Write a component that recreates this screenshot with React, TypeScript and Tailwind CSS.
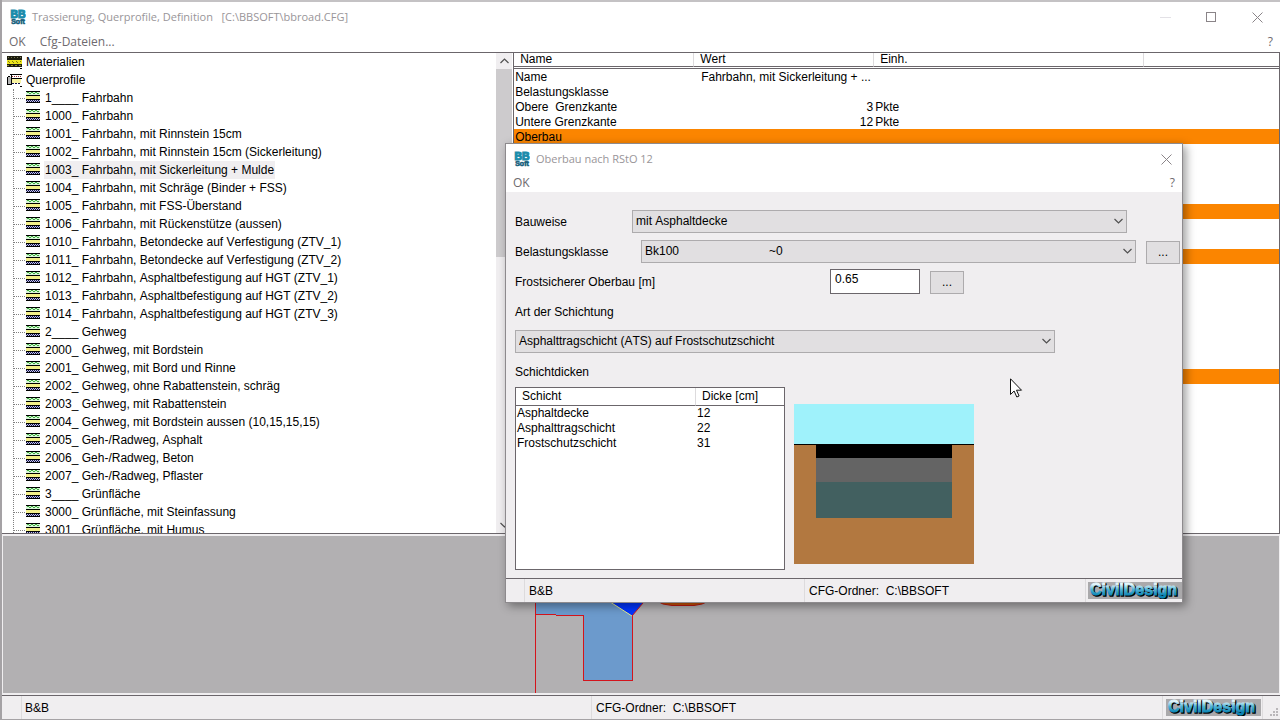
import type { ReactNode } from "react";

const PROFILES = [
  "1____ Fahrbahn",
  "1000_ Fahrbahn",
  "1001_ Fahrbahn, mit Rinnstein 15cm",
  "1002_ Fahrbahn, mit Rinnstein 15cm (Sickerleitung)",
  "1003_ Fahrbahn, mit Sickerleitung + Mulde",
  "1004_ Fahrbahn, mit Schräge (Binder + FSS)",
  "1005_ Fahrbahn, mit FSS-Überstand",
  "1006_ Fahrbahn, mit Rückenstütze (aussen)",
  "1010_ Fahrbahn, Betondecke auf Verfestigung (ZTV_1)",
  "1011_ Fahrbahn, Betondecke auf Verfestigung (ZTV_2)",
  "1012_ Fahrbahn, Asphaltbefestigung auf HGT (ZTV_1)",
  "1013_ Fahrbahn, Asphaltbefestigung auf HGT (ZTV_2)",
  "1014_ Fahrbahn, Asphaltbefestigung auf HGT (ZTV_3)",
  "2____ Gehweg",
  "2000_ Gehweg, mit Bordstein",
  "2001_ Gehweg, mit Bord und Rinne",
  "2002_ Gehweg, ohne Rabattenstein, schräg",
  "2003_ Gehweg, mit Rabattenstein",
  "2004_ Gehweg, mit Bordstein aussen (10,15,15,15)",
  "2005_ Geh-/Radweg, Asphalt",
  "2006_ Geh-/Radweg, Beton",
  "2007_ Geh-/Radweg, Pflaster",
  "3____ Grünfläche",
  "3000_ Grünfläche, mit Steinfassung",
  "3001_ Grünfläche, mit Humus",
];
const SELECTED = 4;

type Property = { name?: string; value?: string; unit?: string; right?: boolean; group?: boolean };

const PROPERTIES: Property[] = [
  { name: "Name", value: "Fahrbahn, mit Sickerleitung + ..." },
  { name: "Belastungsklasse" },
  { name: "Obere\u00a0 Grenzkante", value: "3", unit: "Pkte", right: true },
  { name: "Untere Grenzkante", value: "12", unit: "Pkte", right: true },
  { name: "Oberbau", group: true },
  {},
  {},
  {},
  {},
  { group: true },
  {},
  {},
  { group: true },
  {},
  {},
  {},
  {},
  {},
  {},
  {},
  { group: true },
];

const LAYERS = [
  ["Asphaltdecke", "12"],
  ["Asphalttragschicht", "22"],
  ["Frostschutzschicht", "31"],
];

function BBLogo() {
  return (
    <svg width="16" height="16" viewBox="0 0 16 16" className="shrink-0" aria-hidden="true">
      <g fontFamily="Liberation Sans, sans-serif" fontWeight="bold" textAnchor="middle">
        <text x="8" y="9" fontSize="10.5" fill="#1c8cab" stroke="#1c8cab" strokeWidth="1.1">BB</text>
        <text x="8" y="15" fontSize="7" fill="#17607c" stroke="#17607c" strokeWidth="0.6">Soft</text>
      </g>
    </svg>
  );
}

function LayersIcon() {
  return (
    <svg width="14" height="12" viewBox="0 0 14 12" shapeRendering="crispEdges" className="mb-0.5 shrink-0" aria-hidden="true">
      <rect width="14" height="4" fill="#d8f5d8" />
      <path d="M1 1.5h2M5 1.5h2M9 1.5h2M3 2.5h2M7 2.5h2M11 2.5h2" stroke="#3fae3f" />
      <rect y="5" width="14" height="3" fill="#f4f08a" />
      <rect y="9" width="14" height="2" fill="#c9c9e4" />
      <path d="M0 .5h14M0 4.5h14M0 8.5h14M0 11.5h14" stroke="#000" />
      <path d="M0 9.5h14M1 10.5h13" stroke="#10104c" strokeDasharray="1 1" />
    </svg>
  );
}

function MaterialIcon() {
  return (
    <svg width="15" height="13" viewBox="0 0 15 13" shapeRendering="crispEdges" className="shrink-0" aria-hidden="true">
      <rect width="15" height="11" fill="#1c1c10" />
      <path d="M1 1.5h13" stroke="#77774a" strokeDasharray="1 2" />
      <rect y="4" width="15" height="4" fill="#ece51c" />
      <path d="M1 5.5h13M2 6.5h12" stroke="#7c7a10" strokeDasharray="1 3" />
      <path d="M0 9.5h14" stroke="#8f8b22" strokeDasharray="2 2" />
      <path d="M13 12h2" stroke="#000" />
    </svg>
  );
}

function ProfilesIcon() {
  return (
    <svg width="15" height="13" viewBox="0 0 15 13" shapeRendering="crispEdges" className="shrink-0" aria-hidden="true">
      <path d="M1 3h3v7H1z" fill="#b5b5b5" />
      <path d="M.5 3v8M1 2.5h2M0 10.5h5M4.5 0v11M3 .5h12M4 4.5h11" stroke="#000" fill="none" />
      <path d="M5 2.5h9" stroke="#9c3030" strokeDasharray="1 1" />
      <rect x="5" y="5" width="9" height="4" fill="#f7f2a0" />
      <path d="M5 9.5h9" stroke="#10104c" strokeDasharray="2 1" />
      <path d="M13 12h2" stroke="#000" />
    </svg>
  );
}

function CloseIcon() {
  return (
    <svg width="11" height="11" viewBox="0 0 11 11" stroke="#8a8488" aria-hidden="true">
      <path d="M.5.5l10 10M10.5.5l-10 10" />
    </svg>
  );
}

function Chevron({ up = false }: { up?: boolean }) {
  return (
    <svg width="9" height="6" viewBox="0 0 9 6" fill="none" stroke="#505050" strokeWidth="1.2" aria-hidden="true">
      <path d={up ? "M.5 5l4-4 4 4" : "M.5 1l4 4 4-4"} />
    </svg>
  );
}

function CivilDesignLogo() {
  return (
    <svg width="95" height="17" viewBox="0 0 95 17" className="shrink-0 bg-[#aaa9ab]" role="img" aria-label="CivilDesign">
      <defs>
        <linearGradient id="civil" x1="0" y1="0" x2="0" y2="1">
          <stop offset="0.2" stopColor="#e4f6fb" />
          <stop offset="0.5" stopColor="#4fb4d6" />
          <stop offset="0.85" stopColor="#0a84b4" />
        </linearGradient>
      </defs>
      <g fontFamily="Liberation Sans, sans-serif" fontWeight="bold" fontSize="16">
        <text x="3" y="14" fill="#000" stroke="#000" strokeWidth="1.4">CivilDesign</text>
        <text x="2" y="13" fill="url(#civil)" stroke="url(#civil)" strokeWidth="0.9">CivilDesign</text>
      </g>
    </svg>
  );
}

function Select({ id, value, className }: { id: string; value: string; className: string }) {
  return (
    <div className={`relative ${className}`}>
      <select
        id={id}
        className="block h-[23px] w-full appearance-none border border-[#adabad] bg-[#e1dfe1] px-[3px] text-black"
      >
        <option>{value}</option>
      </select>
      <span className="pointer-events-none absolute inset-y-0 right-1 flex items-center">
        <Chevron />
      </span>
    </div>
  );
}

function BrowseButton({ label }: { label: string }) {
  return (
    <button aria-label={label} className="mt-0.5 h-[23px] w-[34px] shrink-0 border border-[#adabad] bg-[#e1dfe1]">
      ...
    </button>
  );
}

function MenuButton({ children }: { children: ReactNode }) {
  return <button className="text-xs text-[#6e6a6e]">{children}</button>;
}

function ProfileTree() {
  return (
    <div className="flex w-2/5 min-w-0 border-t border-b border-[#6b666b] bg-white">
      <div className="min-w-0 flex-1 overflow-hidden pl-1 whitespace-nowrap">
        <div className="flex h-[18px] items-center gap-1 pl-px">
          <MaterialIcon />
          Materialien
        </div>
        <div className="flex h-[18px] items-center gap-1 pl-px">
          <ProfilesIcon />
          Querprofile
        </div>
        <ul className="ml-[7px] border-l border-dotted border-[#808080]">
          {PROFILES.map((name, i) => (
            <li key={name} className="flex h-[18px] items-center">
              <span className="mr-px w-[11px] border-t border-dotted border-[#808080]" />
              <LayersIcon />
              <span className={i === SELECTED ? "ml-1 bg-[#f0eef0] px-px leading-[18px]" : "ml-1 px-px leading-[18px]"}>
                {name}
              </span>
            </li>
          ))}
        </ul>
      </div>
      <div className="mr-px flex w-4 flex-col items-center bg-[#f0eef0]">
        <span className="flex h-4 items-center">
          <Chevron up />
        </span>
        <span className="h-[188px] w-full bg-[#cdcbcd]" />
        <span className="mt-auto flex h-4 items-center">
          <Chevron />
        </span>
      </div>
    </div>
  );
}

function PropertyList() {
  return (
    <div className="min-w-0 flex-1 overflow-hidden border border-[#6b666b] bg-white">
      <table className="w-full table-fixed border-separate border-spacing-0 text-left">
        <colgroup>
          <col className="w-[180px]" />
          <col className="w-[180px]" />
          <col className="w-[270px]" />
          <col />
        </colgroup>
        <thead className="leading-[13px] *:*:border-b *:*:border-b-[#6b666b]">
          <tr>
            <th className="border-r border-r-[#dddbdd] p-0 pl-1.5 font-normal">Name</th>
            <th className="border-r border-r-[#dddbdd] p-0 pl-1.5 font-normal">Wert</th>
            <th className="border-r border-r-[#dddbdd] p-0 pl-1.5 font-normal">Einh.</th>
            <th className="p-0" />
          </tr>
          <tr>
            <td colSpan={4} className="h-0.5 p-0 leading-none" />
          </tr>
        </thead>
        <tbody className="leading-[14px]">
          {PROPERTIES.map((p, i) => (
            <tr key={i} className={p.group ? "h-[15px] bg-[#fb8500]" : "h-[15px]"}>
              <td className="p-0 pt-px pl-px">{p.name}</td>
              <td className={p.right ? "p-0 pt-px pr-px text-right" : "p-0 pt-px pl-[7px] whitespace-nowrap"}>{p.value}</td>
              <td className="p-0 pt-px pl-px">{p.unit}</td>
              <td className="p-0" />
            </tr>
          ))}
        </tbody>
      </table>
    </div>
  );
}

function ProfileCanvas() {
  return (
    <div className="min-h-0 flex-1">
      <div className="h-full overflow-hidden border-x border-y-2 border-[#f0eef0] bg-[#b2b0b2]">
        <svg width="720" height="158" viewBox="3 536 720 158" aria-hidden="true">
          <path d="M535 590H632V680H583V615H556L555 614H535Z" fill="#6c9acc" />
          <g shapeRendering="crispEdges" fill="#d4141c">
            <path d="M535 590h1v104h-1zM535 614h21v1h-21zM556 615h28v1h-28zM583 615h1v66h-1zM583 680h50v1h-50zM632 615h1v66h-1z" />
          </g>
          <path d="M590 589L632 616L654 590Z" fill="#0035ff" />
          <path d="M590 589L632 616" stroke="#e8f08c" />
          <path d="M632 616L654 590" stroke="#d4141c" />
          <path d="M655 600L663 604L672 605.5H694L702 604L711 600Z" fill="#c85408" stroke="#c01810" />
        </svg>
      </div>
    </div>
  );
}

function LayerSketch() {
  return (
    <svg width="180" height="160" viewBox="0 0 180 160" shapeRendering="crispEdges" className="shrink-0" aria-hidden="true">
      <rect width="180" height="160" fill="#b27840" />
      <rect width="180" height="40" fill="#9ff2fb" />
      <rect y="40" width="180" height="1" fill="#000" />
      <rect x="22" y="40" width="136" height="14" fill="#000" />
      <rect x="22" y="54" width="136" height="24" fill="#646464" />
      <rect x="22" y="78" width="136" height="36" fill="#426060" />
    </svg>
  );
}

function OberbauDialog() {
  return (
    <section
      role="dialog"
      aria-label="Oberbau nach RStO 12"
      className="absolute top-[143px] left-[503px] w-[678px] border border-[#8d8a8d] bg-[#f0eef0] shadow-[3px_3px_9px_rgba(0,0,0,0.4)]"
    >
      <header className="bg-white font-['Open_Sans',sans-serif] text-[11px]">
        <div className="flex h-[30px] items-center gap-1.5 pl-2 text-[#999599]">
          <BBLogo />
          <span className="flex-1">Oberbau nach RStO 12</span>
          <button aria-label="Schließen" className="flex w-8 justify-center">
            <CloseIcon />
          </button>
        </div>
        <div className="flex h-[18px] items-center justify-between px-[7px]">
          <MenuButton>OK</MenuButton>
          <MenuButton>?</MenuButton>
        </div>
      </header>

      <div className="px-[9px] pt-3.5 pb-2">
        <div className="flex h-[30px] items-center">
          <label htmlFor="bauweise" className="w-[117px] pt-0.5">Bauweise</label>
          <Select id="bauweise" value="mit Asphaltdecke" className="w-[495px]" />
        </div>
        <div className="-mr-2 flex h-[30px] items-center">
          <label htmlFor="klasse" className="w-[126px] pt-0.5">Belastungsklasse</label>
          <Select id="klasse" value={"Bk100" + "\u00a0".repeat(27) + "~0"} className="mr-2.5 w-[495px]" />
          <BrowseButton label="Belastungsklasse wählen" />
        </div>
        <div className="flex h-[30px] items-center">
          <label htmlFor="oberbau" className="w-[315px] pt-0.5">Frostsicherer Oberbau [m]</label>
          <input id="oberbau" defaultValue="0.65" className="mr-2.5 h-[25px] w-[90px] border border-[#6b666b] bg-white px-1 pb-1" />
          <BrowseButton label="Frostsicheren Oberbau berechnen" />
        </div>
        <label htmlFor="schichtung" className="flex h-[30px] items-center pt-0.5">Art der Schichtung</label>
        <div className="flex h-[30px] items-center">
          <Select id="schichtung" value="Asphalttragschicht (ATS) auf Frostschutzschicht" className="w-[540px]" />
        </div>
        <h2 className="flex h-[30px] items-center pt-0.5">Schichtdicken</h2>
        <div className="mt-px flex items-end gap-[9px]">
          <div className="h-[183px] w-[270px] border border-[#6b666b] bg-white">
            <table className="w-full table-fixed border-separate border-spacing-0 text-left">
              <thead className="leading-[17px]">
                <tr>
                  <th className="w-[180px] border-r border-b border-r-[#dddbdd] border-b-[#6b666b] p-0 pl-1.5 font-normal">Schicht</th>
                  <th className="border-b border-b-[#6b666b] p-0 pl-1.5 font-normal">Dicke [cm]</th>
                </tr>
              </thead>
              <tbody>
                {LAYERS.map(([layer, thickness]) => (
                  <tr key={layer} className="h-[15px] leading-[15px]">
                    <td className="p-0 pl-px">{layer}</td>
                    <td className="p-0 pl-px">{thickness}</td>
                  </tr>
                ))}
              </tbody>
            </table>
          </div>
          <div className="pb-1.5">
            <LayerSketch />
          </div>
        </div>
      </div>

      <footer className="flex h-6 items-stretch border-t border-[#6b666b] leading-6">
        <span className="w-[19px] border-r border-[#dddbdd]" />
        <span className="w-[280px] border-r border-[#dddbdd] pl-1">B&amp;B</span>
        <span className="flex-1 pl-1 whitespace-pre">CFG-Ordner:  C:\BBSOFT</span>
        <span className="flex w-[97px] items-center overflow-hidden border-l border-[#dddbdd] pl-0.5">
          <CivilDesignLogo />
        </span>
      </footer>
    </section>
  );
}

export default function App() {
  return (
    <div className="relative flex h-screen w-full flex-col overflow-hidden border-b border-l-2 border-[#a5a2a5] bg-[#f0eef0] font-['Liberation_Sans',sans-serif] text-[12px] text-black [font-kerning:none]">
      <header className="border-t-2 border-[#c4c2c4] bg-white font-['Open_Sans',sans-serif] text-[11px]">
        <div className="flex h-[30px] items-center gap-1.5 pl-2 text-[#999599]">
          <BBLogo />
          <h1 className="flex-1 whitespace-pre">Trassierung, Querprofile, Definition   [C:\BBSOFT\bbroad.CFG]</h1>
          <div className="flex h-full">
            <button aria-label="Minimieren" className="flex w-[46px] items-center justify-center">
              <span className="h-px w-[11px] bg-[#e3e1e6]" />
            </button>
            <button aria-label="Maximieren" className="flex w-[46px] items-center justify-center">
              <span className="size-2.5 border border-[#8a8488]" />
            </button>
            <button aria-label="Schließen" className="flex w-[46px] items-center justify-center">
              <CloseIcon />
            </button>
          </div>
        </div>
        <nav className="flex h-5 items-center gap-3.5 px-[7px]">
          <MenuButton>OK</MenuButton>
          <MenuButton>Cfg-Dateien...</MenuButton>
          <span className="ml-auto">
            <MenuButton>?</MenuButton>
          </span>
        </nav>
      </header>

      <main className="flex min-h-0 flex-1 flex-col">
        <div className="flex min-h-0 flex-[3]">
          <ProfileTree />
          <PropertyList />
        </div>
        <ProfileCanvas />
      </main>

      <footer className="flex h-6 items-stretch border-t border-[#6b666b] leading-6">
        <span className="w-5 border-r border-[#dddbdd]" />
        <span className="w-[570px] border-r border-[#dddbdd] pl-[3px]">B&amp;B</span>
        <span className="flex-1 pl-1 whitespace-pre">CFG-Ordner:  C:\BBSOFT</span>
        <span className="flex w-[101px] items-center border-r border-l border-[#dddbdd] pl-[3px]">
          <CivilDesignLogo />
        </span>
        <svg width="17" height="22" viewBox="0 0 17 22" shapeRendering="crispEdges" fill="#b9b6b9" aria-hidden="true">
          <path d="M13 12h2v2h-2zM10 15h2v2h-2zM13 15h2v2h-2zM7 18h2v2H7zM10 18h2v2h-2zM13 18h2v2h-2z" />
        </svg>
      </footer>

      <OberbauDialog />

      {/* mouse pointer */}
      <svg width="13" height="20" viewBox="0 0 13 20" className="absolute top-[378px] left-[1008px]" aria-hidden="true">
        <path d="M.5.8v15.7l3.6-3.5 2.7 6 2.3-1-2.6-5.8h5z" fill="#fff" stroke="#111" />
      </svg>
    </div>
  );
}
